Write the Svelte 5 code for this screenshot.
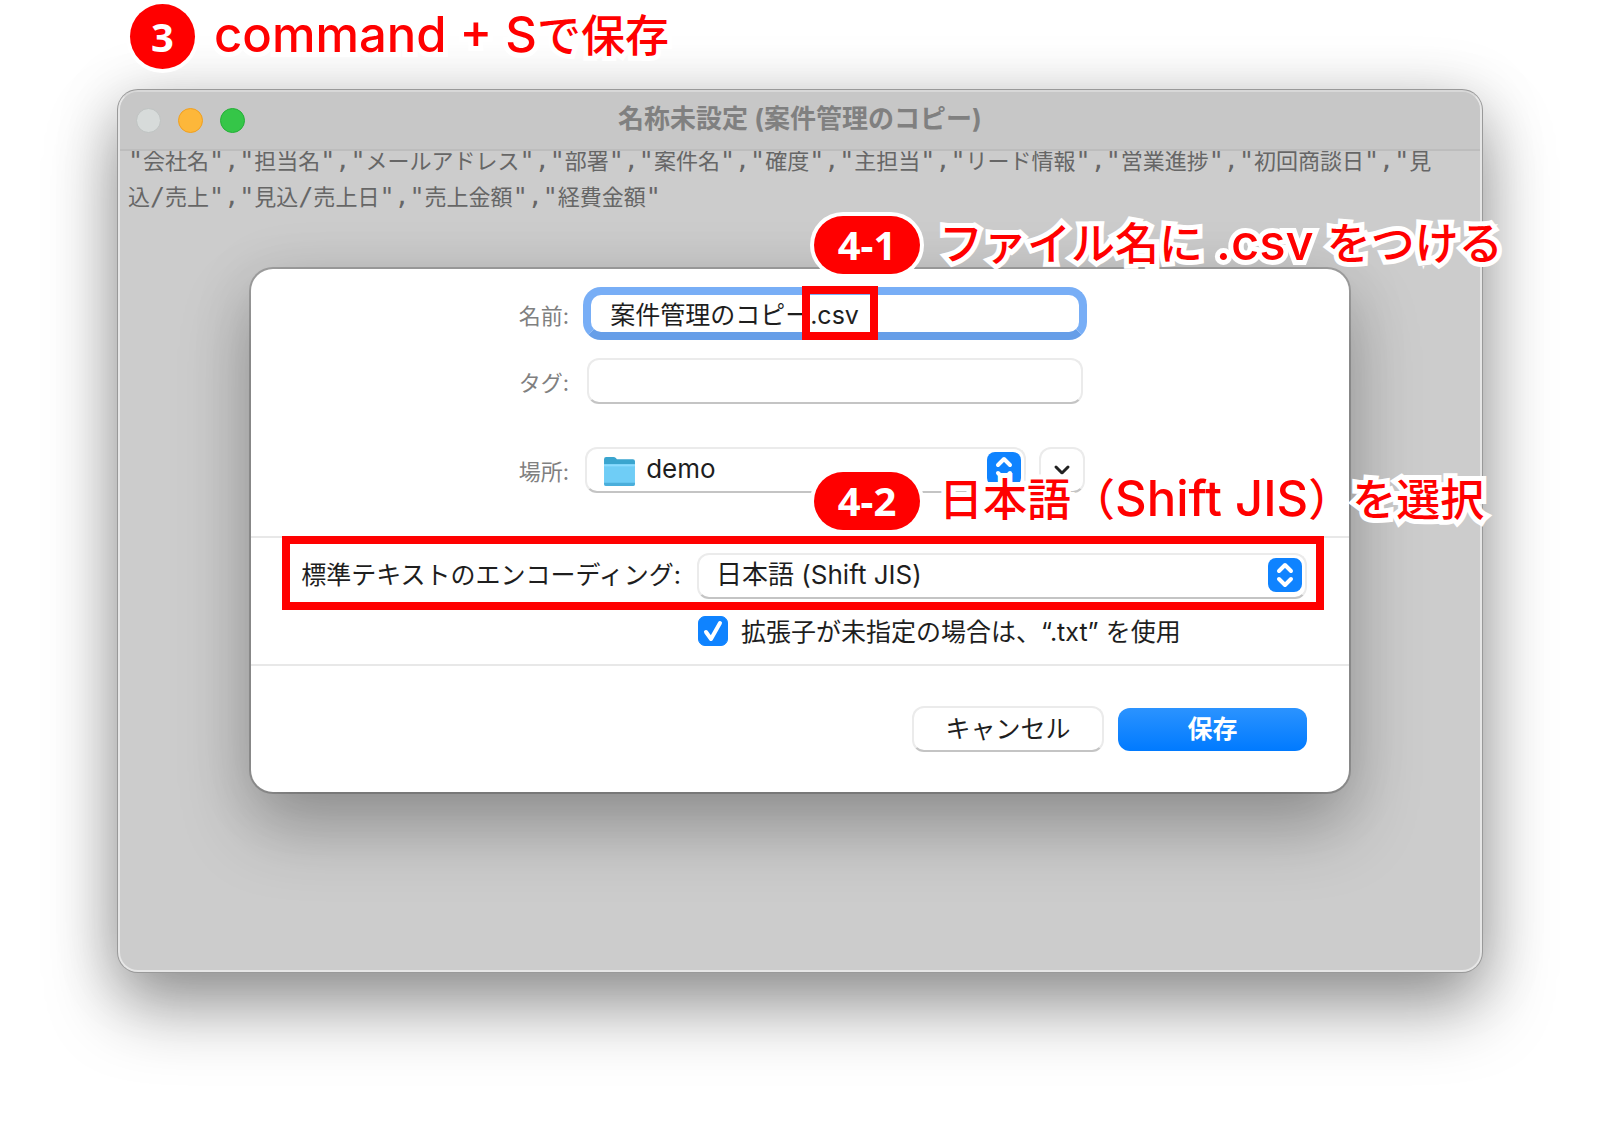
<script>
  const columns = [
    '会社名', '担当名', 'メールアドレス', '部署', '案件名', '確度', '主担当', 'リード情報',
    '営業進捗', '初回商談日', '見込/売上', '見込/売上日', '売上金額', '経費金額'
  ];
  const text = columns.map((name) => `"${name}"`).join(',');
  // Latin punctuation and Japanese characters each get their own size;
  // a line may break between any two Japanese characters.
  const runs = text.match(/[",/]+|[^",/]/g).map((value) => ({ value, wide: !/[",/]/.test(value) }));

  let fileName = $state('案件管理のコピー.csv');
  let tags = $state('');
  let useTxt = $state(true);
</script>

<main>
  <h1 class="note heading">
    <span class="badge round">3</span>
    <span class="label"><span class="latin">command + S</span>で保存</span>
  </h1>

  <section class="window">
    <header class="titlebar">
      <div class="lights">
        <button class="light close" aria-label="閉じる"></button>
        <button class="light minimize" aria-label="しまう"></button>
        <button class="light zoom" aria-label="拡大"></button>
      </div>
      <h2>名称未設定 (案件管理のコピー)</h2>
    </header>

    <p class="document">{#each runs as run}<span class:wide={run.wide}>{run.value}</span>{/each}</p>

    <form class="dialog" onsubmit={(e) => e.preventDefault()}>
      <div class="fields">
        <label for="name">名前:</label>
        <div class="cell">
          <input id="name" class="focused" type="text" bind:value={fileName} />
          <span class="mark"></span>
        </div>

        <label for="tags">タグ:</label>
        <div class="cell inset">
          <input id="tags" type="text" bind:value={tags} />
        </div>

        <label for="place">場所:</label>
        <div class="cell place">
          <div class="popup">
            <svg class="folder" viewBox="0 0 32 32" aria-hidden="true">
              <path d="M1 4q0-2 2-2h7q1.500 0 2.500 1l1 1H29q2 0 2 2v6H1z" fill="#3aa5cf" />
              <path d="M1 9h30v19q0 2-2 2H3q-2 0-2-2z" fill="#6fcdf6" />
              <path d="M1 9h30v2H1z" fill="#8cdcff" />
              <path d="M1 27h30v1q0 2-2 2H3q-2 0-2-2z" fill="#4aaedb" />
            </svg>
            <select id="place"><option>demo</option></select>
            <svg class="stepper" viewBox="0 0 34 34" aria-hidden="true">
              <rect width="34" height="34" rx="8" fill="#0f83ff" />
              <path d="M11 13l6-6 6 6M11 21l6 6 6-6" />
            </svg>
          </div>
          <button class="expand" type="button" aria-label="詳細を表示">
            <svg viewBox="0 0 20 20" aria-hidden="true"><path d="M4 7l6 6 6-6" /></svg>
          </button>
        </div>
      </div>

      <div class="options">
        <div class="encoding">
          <label for="encoding">標準テキストのエンコーディング:</label>
          <div class="popup">
            <select id="encoding"><option>日本語 (Shift JIS)</option></select>
            <svg class="stepper" viewBox="0 0 34 34" aria-hidden="true">
              <rect width="34" height="34" rx="8" fill="#0f83ff" />
              <path d="M11 13l6-6 6 6M11 21l6 6 6-6" />
            </svg>
          </div>
        </div>
        <label class="check">
          <input type="checkbox" bind:checked={useTxt} />
          <svg viewBox="0 0 30 30" aria-hidden="true"><path d="M8 16l5 7 9-16" /></svg>
          <span>拡張子が未指定の場合は、“.txt” を使用</span>
        </label>
      </div>

      <footer>
        <button class="cancel" type="button">キャンセル</button>
        <button class="save" type="submit">保存</button>
      </footer>

      <p class="note step-one">
        <span class="badge">4-1</span>
        <span class="label">ファイル名に<span class="latin">{' .csv '}</span>をつける</span>
      </p>
      <p class="note step-two">
        <span class="badge">4-2</span>
        <span class="label">日本語（<span class="latin">Shift JIS</span>）を選択</span>
      </p>
    </form>
  </section>
</main>

<style>
  :global(body) {
    margin: 0;
    background: #fff;
  }

  main {
    min-height: 100vh;
    box-sizing: border-box;
    padding: 4px 118px 156px;
    overflow: hidden;
    font-family: Inter, 'Noto Sans CJK JP', sans-serif;
    font-size: 25px;
    color: #1e1e1e;
  }

  h1, h2, p {
    margin: 0;
  }

  input, select, button {
    box-sizing: border-box;
    margin: 0;
    font: inherit;
    color: inherit;
  }

  /* Red call-outs */
  .note {
    display: flex;
    align-items: center;
    gap: 19px;
    color: #f00;
    font-size: 44px;
    font-weight: 500;
    line-height: 58px;
    white-space: nowrap;
    z-index: 3;
  }

  .note .label {
    padding-bottom: 2px;
    line-height: 56px;
    white-space: pre;
    -webkit-text-stroke: 10px #fff;
    paint-order: stroke fill;
    stroke-linejoin: round;
  }

  .note .latin {
    font-size: 49px;
  }

  .badge {
    flex: none;
    width: 106px;
    height: 58px;
    border-radius: 33px;
    background: #f00;
    box-shadow: 0 0 0 4px #fff;
    color: #fff;
    font-family: 'Noto Sans', sans-serif;
    font-size: 40px;
    font-weight: 700;
    text-align: center;
  }

  .badge.round {
    width: 65px;
    height: 65px;
    line-height: 65px;
  }

  .heading {
    position: relative;
    height: 65px;
    margin: 0 12px 21px;
  }

  .step-one, .step-two {
    position: absolute;
    left: calc(50% + 14px);
  }

  .step-one { top: -54px; }
  .step-two { top: 202px; }

  /* Editor window */
  .window {
    position: relative;
    box-sizing: border-box;
    padding-bottom: 178px;
    border: 2px solid #e6e6e6;
    border-top-color: #d8d8d8;
    border-radius: 20px;
    background: #ccc;
    box-shadow: 0 0 0 1px #999, 0 36px 70px rgba(0, 0, 0, 0.36), 0 8px 64px rgba(0, 0, 0, 0.18);
  }

  .titlebar {
    position: relative;
    display: flex;
    align-items: center;
    justify-content: center;
    height: 57px;
    border-bottom: 2px solid #bdbdbd;
    border-radius: 18px 18px 0 0;
    background: #c7c7c7;
  }

  .lights {
    position: absolute;
    left: 16px;
    display: flex;
    gap: 17px;
  }

  .light {
    width: 25px;
    height: 25px;
    padding: 0;
    border: 1px solid #bfc3c2;
    border-radius: 50%;
    background: #d7dbda;
  }

  .minimize { background: #fdb73a; border-color: #f0a020; }
  .zoom { background: #35c648; border-color: #24b037; }

  h2 {
    padding-bottom: 4px;
    color: #808080;
    font-size: 26px;
    font-weight: 700;
    line-height: 36px;
  }

  .document {
    margin: -8px 30px 0 8px;
    color: #666;
    font-family: 'DejaVu Sans Mono', 'Noto Sans CJK JP', monospace;
    font-size: 25px;
    line-height: 36px;
  }

  .wide {
    font-family: 'Noto Sans CJK JP', sans-serif;
    font-size: 22px;
    line-height: 22px;
  }

  /* Save dialog */
  .dialog {
    position: relative;
    margin: 54px 131px 0;
    border-radius: 22px;
    background: #fff;
    box-shadow: 0 0 0 2px rgba(0, 0, 0, 0.2), 0 36px 70px rgba(0, 0, 0, 0.26), 0 8px 64px rgba(0, 0, 0, 0.1);
  }

  .fields {
    display: grid;
    grid-template-columns: auto 504px;
    align-items: center;
    justify-content: center;
    column-gap: 14px;
    padding: 18px 0 43px 6px;
  }

  .fields label {
    color: #808080;
    font-size: 22px;
    text-align: right;
  }

  .fields > :nth-child(3), .fields > :nth-child(4) { margin-top: 18px; }
  .fields > :nth-child(5), .fields > :nth-child(6) { margin-top: 43px; }

  .cell {
    position: relative;
    display: flex;
  }

  .inset { padding: 0 4px; }

  .fields input {
    width: 100%;
    height: 46px;
    padding: 0 14px;
    border: 2px solid #ebebeb;
    border-bottom-color: #c4c4c4;
    border-radius: 12px;
    background: #fff;
    outline: none;
  }

  .fields .focused {
    height: 53px;
    padding: 0 19px 2px;
    border: 8px solid #78aef6;
    border-bottom-color: #669ee8;
    border-radius: 18px;
  }

  .mark {
    position: absolute;
    top: -1px;
    left: 219px;
    box-sizing: border-box;
    width: 76px;
    height: 54px;
    border: 8px solid #f00;
    pointer-events: none;
  }

  .place {
    gap: 13px;
    padding: 0 2px;
  }

  .popup {
    position: relative;
    flex: 1;
  }

  .popup select {
    display: block;
    width: 100%;
    height: 46px;
    padding: 0 60px 3px 17px;
    border: 2px solid #ebebeb;
    border-bottom-color: #c4c4c4;
    border-radius: 12px;
    background: #fff;
    font-size: 26px;
    appearance: none;
  }

  .place .popup select { padding-left: 59px; }

  .stepper {
    position: absolute;
    top: 5px;
    right: 5px;
    width: 34px;
    height: 34px;
    pointer-events: none;
  }

  .folder {
    position: absolute;
    top: 8px;
    left: 18px;
    width: 33px;
    height: 33px;
    pointer-events: none;
  }

  .stepper path, .expand path, .check path {
    fill: none;
    stroke: #fff;
    stroke-width: 4;
    stroke-linecap: round;
    stroke-linejoin: round;
  }

  .expand {
    display: grid;
    place-items: center;
    width: 46px;
    height: 46px;
    padding: 0;
    border: 2px solid #ebebeb;
    border-bottom-color: #c4c4c4;
    border-radius: 12px;
    background: #fff;
  }

  .expand svg { width: 20px; height: 20px; }
  .expand path { stroke: #222; stroke-width: 3; }

  .options {
    padding-bottom: 18px;
    border: solid #e8e8e8;
    border-width: 2px 0;
  }

  .encoding {
    display: flex;
    align-items: center;
    justify-content: flex-end;
    gap: 16px;
    margin: -2px 25px 0 31px;
    padding: 9px 9px 3px 0;
    border: 8px solid #f00;
  }

  .encoding label { padding-bottom: 6px; }

  .encoding .popup { flex: 0 0 610px; }

  .check {
    position: relative;
    display: flex;
    align-items: center;
    gap: 13px;
    width: 609px;
    height: 30px;
    margin: 6px 42px 0 auto;
    white-space: nowrap;
  }

  .check span { padding-bottom: 2px; }

  .check input {
    width: 30px;
    height: 30px;
    border: 1px solid #c4c4c4;
    border-radius: 7px;
    background: #fff;
    appearance: none;
  }

  .check input:checked {
    border-color: #0f83ff;
    background: #0f83ff;
  }

  .check svg {
    position: absolute;
    left: 0;
    width: 30px;
    height: 30px;
    pointer-events: none;
  }

  footer {
    display: flex;
    align-items: center;
    justify-content: flex-end;
    gap: 14px;
    padding: 40px 42px 40px;
  }

  footer button {
    padding: 0;
    border-radius: 12px;
    line-height: 36px;
  }

  .cancel {
    width: 192px;
    height: 46px;
    border: 2px solid #ebebeb;
    border-bottom-color: #c4c4c4;
    background: #fff;
  }

  .save {
    width: 189px;
    height: 43px;
    border: 0;
    background: linear-gradient(#2b93ff, #007aff);
    color: #fff;
    font-weight: 700;
  }
</style>
